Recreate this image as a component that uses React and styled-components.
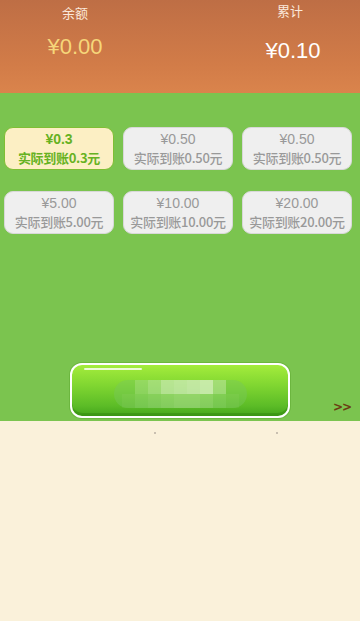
import styled, { createGlobalStyle } from 'styled-components';

// 提现页面: 顶部余额 / 累计, 金额选择卡片, 提现按钮.

const AMOUNTS = [
  { price: '¥0.3', desc: '实际到账0.3元', active: true },
  { price: '¥0.50', desc: '实际到账0.50元' },
  { price: '¥0.50', desc: '实际到账0.50元' },
  { price: '¥5.00', desc: '实际到账5.00元' },
  { price: '¥10.00', desc: '实际到账10.00元' },
  { price: '¥20.00', desc: '实际到账20.00元' },
];

// 按钮上的马赛克文字 (每格透明度)
const MOSAIC = [
  [0, 0.2, 0.35, 0.55, 0.6, 0.65, 0.7, 0.35, 0],
  [0.05, 0.12, 0.18, 0.22, 0.28, 0.28, 0.22, 0.12, 0.05],
];

const GlobalStyle = createGlobalStyle`
  html, body {
    margin: 0;
    padding: 0;
    background: #faf1da;
  }
  body {
    font-family: 'Noto Sans CJK SC', 'Liberation Sans', sans-serif;
  }
  * {
    box-sizing: border-box;
  }
`;

const Page = styled.div`
  width: 360px;
  height: 621px;
  display: flex;
  flex-direction: column;
  background: #faf1da;
`;

const Header = styled.div`
  height: 93px;
  display: flex;
  justify-content: space-between;
  background: linear-gradient(180deg, #be6e45 0%, #d27c48 70%, #da844c 100%);
`;

const Stat = styled.div`
  width: ${({ $w }) => $w}px;
  display: flex;
  flex-direction: column;
  align-items: center;
  padding-top: ${({ $top }) => $top}px;
`;

const StatLabel = styled.div`
  font-size: 13px;
  line-height: 18px;
  color: #fbe9dc;
`;

const StatValue = styled.div`
  margin-top: ${({ $gap }) => $gap}px;
  font-family: 'Liberation Sans', 'Noto Sans CJK SC', sans-serif;
  font-size: 22px;
  line-height: 24px;
  color: ${({ $gold }) => ($gold ? '#f6d67a' : '#ffffff')};
  padding-left: ${({ $shift }) => $shift || 0}px;
`;

const Green = styled.div`
  height: 328px;
  background: #7bc44f;
  display: flex;
  flex-direction: column;
  padding: 34px 8px 3px 4px;
`;

const Grid = styled.div`
  display: grid;
  grid-template-columns: repeat(3, 1fr);
  column-gap: 9px;
  row-gap: 21px;
`;

const Card = styled.div`
  height: 43px;
  border-radius: 9px;
  border: 1.5px solid ${({ $active }) => ($active ? '#7fbe34' : '#d8d8d8')};
  background: ${({ $active }) => ($active ? '#fcefc4' : '#efefef')};
  color: ${({ $active }) => ($active ? '#66b222' : '#999999')};
  display: flex;
  flex-direction: column;
  align-items: center;
  justify-content: center;
  font-weight: ${({ $active }) => ($active ? 700 : 500)};
`;

const Price = styled.div`
  font-family: 'Liberation Sans', 'Noto Sans CJK SC', sans-serif;
  font-size: 14px;
  line-height: 18px;
`;

const Desc = styled.div`
  font-size: 13px;
  line-height: 19px;
  white-space: nowrap;
  letter-spacing: -0.3px;
`;

const Footer = styled.div`
  margin-top: auto;
  display: grid;
  grid-template-columns: 1fr auto 1fr;
  align-items: end;
`;

const Button = styled.button`
  grid-column: 2;
  width: 220px;
  height: 55px;
  margin-left: 4px;
  padding: 0;
  border: 2px solid #ffffff;
  border-radius: 12px;
  background: linear-gradient(180deg, #a4ec3c 0%, #80d631 40%, #5cbc27 80%, #44a51b 100%);
  box-shadow: 0 0 0 1px #6cb63f, inset 0 -3px 0 rgba(40, 120, 10, 0.35);
  display: flex;
  align-items: center;
  justify-content: center;
  position: relative;
  overflow: hidden;
`;

const Shine = styled.span`
  position: absolute;
  top: 3px;
  left: 12px;
  width: 58px;
  height: 2px;
  border-radius: 2px;
  background: rgba(255, 255, 255, 0.8);
`;

const Mosaic = styled.div`
  display: grid;
  grid-template-columns: repeat(9, 13px);
  grid-auto-rows: 14px;
  padding: 0 8px;
  margin-top: 6px;
  border-radius: 14px;
  background: rgba(120, 200, 90, 0.45);
  filter: blur(0.5px);
`;

const Cell = styled.span`
  display: block;
`;

const More = styled.div`
  justify-self: end;
  margin: 0 1px 5px 0;
  font-family: 'DejaVu Sans', sans-serif;
  font-size: 12px;
  font-weight: 700;
  line-height: 12px;
  color: #6a3d12;
  letter-spacing: -1px;
`;

const Bottom = styled.div`
  flex: 1;
  background: #faf1da;
  display: flex;
  padding: 11px 0 0 154px;
  gap: 120px;
`;

const Dot = styled.span`
  width: 2px;
  height: 2px;
  background: #c9c0b0;
`;

export default function App() {
  return (
    <>
      <GlobalStyle />
      <Page>
        <Header>
          <Stat $w={150} $top={4}>
            <StatLabel>余额</StatLabel>
            <StatValue $gold $gap={13}>¥0.00</StatValue>
          </Stat>
          <Stat $w={140} $top={2}>
            <StatLabel>累计</StatLabel>
            <StatValue $gap={19} $shift={6}>¥0.10</StatValue>
          </Stat>
        </Header>
        <Green>
          <Grid>
            {AMOUNTS.map((a, i) => (
              <Card key={i} $active={a.active}>
                <Price>{a.price}</Price>
                <Desc>{a.desc}</Desc>
              </Card>
            ))}
          </Grid>
          <Footer>
            <Button type="button">
              <Shine />
              <Mosaic>
                {MOSAIC.flatMap((row, r) =>
                  row.map((o, c) => (
                    <Cell key={`${r}-${c}`} style={{ background: `rgba(230, 245, 210, ${o})` }} />
                  ))
                )}
              </Mosaic>
            </Button>
            <More>&gt;&gt;</More>
          </Footer>
        </Green>
        <Bottom>
          <Dot />
          <Dot />
        </Bottom>
      </Page>
    </>
  );
}
